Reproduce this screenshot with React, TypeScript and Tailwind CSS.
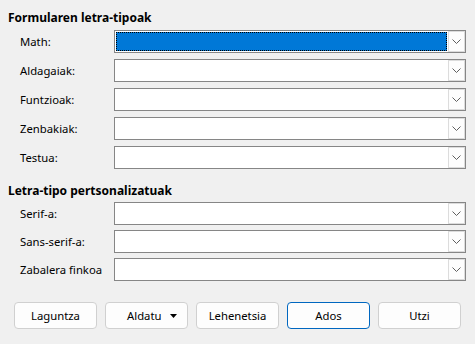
import React from "react";

const formulaRows = ["Math:", "Aldagaiak:", "Funtzioak:", "Zenbakiak:", "Testua:"];
const customRows = ["Serif-a:", "Sans-serif-a:", "Zabalera finkoa"];

function Chevron() {
    return (
        <svg width="9" height="5" viewBox="0 0 9 5" className="block">
            <path d="M0.5 0.5 L4.5 4.5 L8.5 0.5" fill="none" stroke="#5f5f5f" strokeWidth="1" />
        </svg>
    );
}

function Combo({ focused = false }: { focused?: boolean }) {
    return (
        <div className="flex h-[23px] flex-1 border border-[#868686] bg-white">
            {focused ? (
                <div className="m-[1px] flex-1 border border-dotted border-black bg-[#0078d7]" />
            ) : (
                <div className="flex-1" />
            )}
            <div className="flex w-[17px] items-center justify-center border border-[#dcdcdc] bg-[#fdfdfd]">
                <Chevron />
            </div>
        </div>
    );
}

function Row({ label, focused }: { label: string; focused?: boolean }) {
    return (
        <div className="flex items-center">
            <div className="w-[106px] pl-[12px]">{label}</div>
            <Combo focused={focused} />
        </div>
    );
}

function Button({ children, primary = false }: { children: React.ReactNode; primary?: boolean }) {
    return (
        <button
            className={
                "flex h-[27px] w-[83px] items-center justify-center rounded-[4px] border bg-[#fdfdfd] " +
                (primary ? "border-[#0067c0]" : "border-[#d0d0d0]")
            }
        >
            {children}
        </button>
    );
}

export default function App() {
    return (
        <div
            className="h-[344px] w-[475px] bg-[#f0f0f0] pl-[8px] pr-[9px] pt-[10px] text-[11.3px] leading-[16px] text-black"
            style={{ fontFamily: '"Noto Sans", sans-serif' }}
        >
            <h2 className="text-[12px] font-bold">Formularen letra-tipoak</h2>
            <div className="mt-[4px] flex flex-col gap-[6px]">
                {formulaRows.map((r, i) => (
                    <Row key={r} label={r} focused={i === 0} />
                ))}
            </div>

            <h2 className="mt-[14px] text-[12px] font-bold">Letra-tipo pertsonalizatuak</h2>
            <div className="mt-[3px] flex flex-col gap-[5px]">
                {customRows.map((r) => (
                    <Row key={r} label={r} />
                ))}
            </div>

            <div className="ml-[6px] mt-[21px] flex gap-[8px]">
                <Button>Laguntza</Button>
                <button className="flex h-[27px] w-[83px] items-center justify-between rounded-[4px] border border-[#d0d0d0] bg-[#fdfdfd] pl-[21px] pr-[10px]">
                    <span>Aldatu</span>
                    <svg width="7" height="4" viewBox="0 0 7 4" className="block">
                        <path d="M0 0 L7 0 L3.5 4 Z" fill="#000" />
                    </svg>
                </button>
                <Button>Lehenetsia</Button>
                <Button primary>Ados</Button>
                <Button>Utzi</Button>
            </div>
        </div>
    );
}
